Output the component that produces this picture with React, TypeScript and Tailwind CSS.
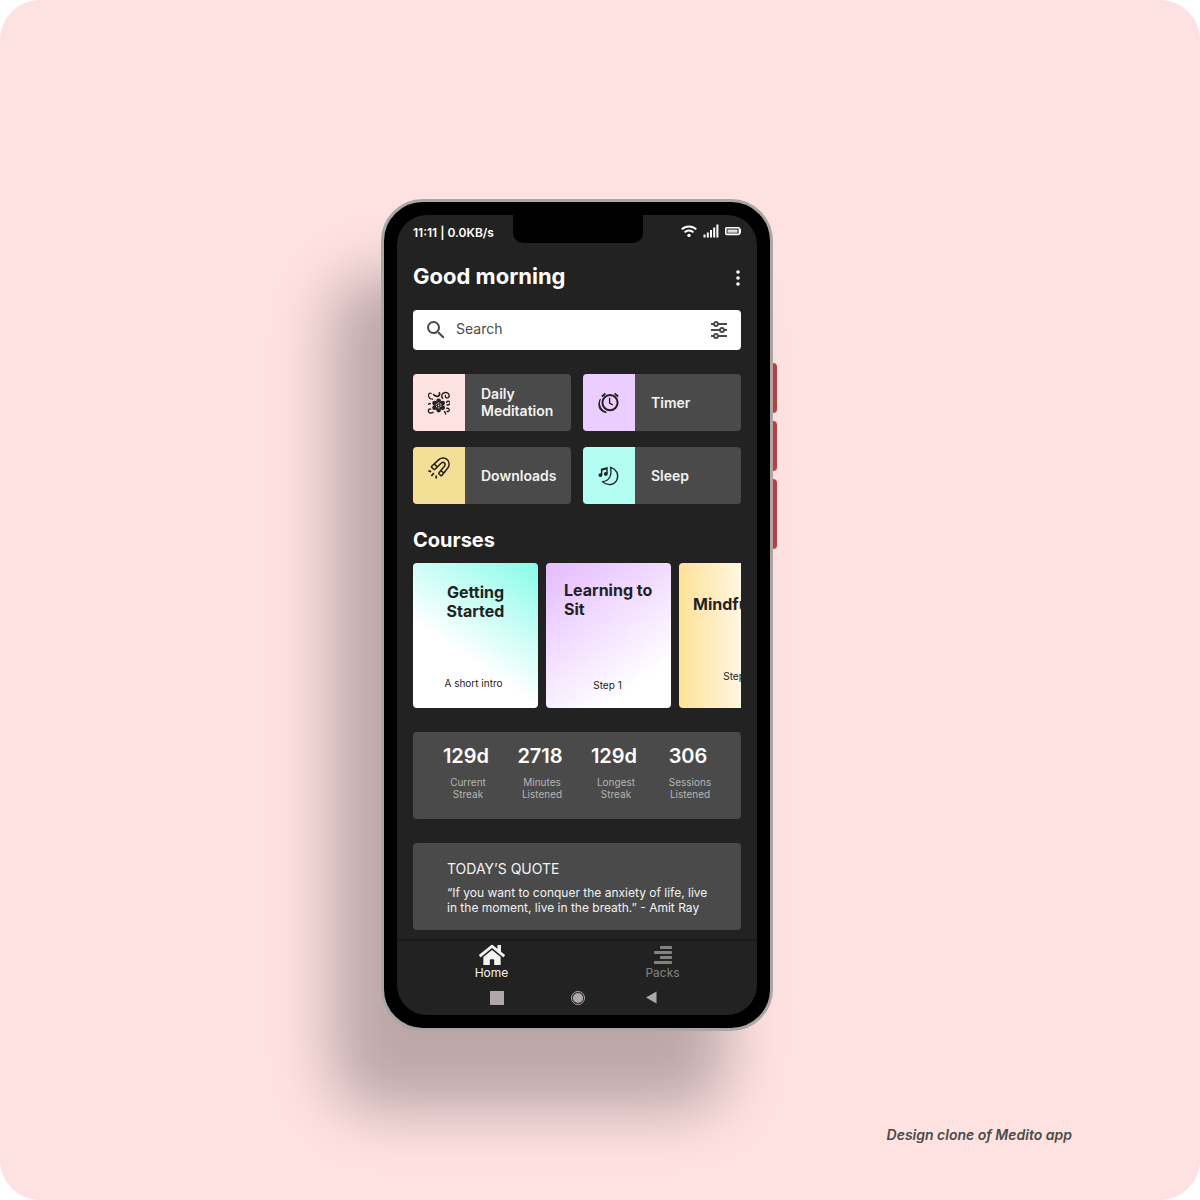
import React from "react";
import { FaHome } from "react-icons/fa";
import { MdSearch } from "react-icons/md";

function WifiIcon() {
  return (
    <svg width="16" height="14" viewBox="0 0 16 14" fill="none" stroke="#fff" strokeWidth="2" aria-hidden="true">
      <path d="M0.8 5.4C4.8 1.5 11.2 1.5 15.2 5.4" />
      <path d="M3.6 8.4C6 6 10 6 12.4 8.4" />
      <circle cx="8" cy="11.4" r="1.7" fill="#fff" stroke="none" />
    </svg>
  );
}

function SignalIcon() {
  return (
    <svg width="16" height="14" viewBox="0 0 16 14" fill="#fff" aria-hidden="true">
      <rect x="0.5" y="10.5" width="2" height="3" />
      <rect x="3.8" y="8.5" width="2" height="5" />
      <rect x="7" y="6" width="2" height="7.5" />
      <rect x="10.2" y="3.5" width="2" height="10" />
      <rect x="13.4" y="0.5" width="2" height="13" />
    </svg>
  );
}

function BatteryIcon() {
  return (
    <svg width="16" height="14" viewBox="0 0 16 14" aria-hidden="true">
      <rect x="0.8" y="3.8" width="13.6" height="6.6" rx="1" fill="none" stroke="#fff" strokeWidth="1.6" />
      <rect x="2.5" y="5.5" width="10" height="3.2" fill="#ddd" />
      <rect x="14.6" y="4.8" width="1.4" height="4.6" rx="0.5" fill="#fff" />
    </svg>
  );
}

function FilterIcon() {
  return (
    <svg width="18" height="18" viewBox="0 0 18 18" fill="none" stroke="#4a4a4a" strokeWidth="1.9" aria-hidden="true">
      <path d="M1 3h3M8 3h9M1 9h9M14 9h3M1 15h3M8 15h9" />
      <circle cx="6" cy="3" r="2" />
      <circle cx="12" cy="9" r="2" />
      <circle cx="6" cy="15" r="2" />
    </svg>
  );
}

function FlowerIcon() {
  return (
    <svg width="24" height="24" viewBox="0 0 24 24" fill="none" stroke="#222" strokeLinecap="round" aria-hidden="true">
      <g fill="#222" stroke="none">
        <circle cx="11.6" cy="9.8" r="2.4" />
        <circle cx="15.6" cy="12.1" r="2.4" />
        <circle cx="15.6" cy="16.7" r="2.4" />
        <circle cx="11.6" cy="19" r="2.4" />
        <circle cx="7.6" cy="16.7" r="2.4" />
        <circle cx="7.6" cy="12.1" r="2.4" />
        <circle cx="11.6" cy="14.4" r="4.4" />
      </g>
      <circle cx="11.6" cy="14.4" r="2.5" stroke="#fee1e1" strokeWidth="1" strokeLinecap="butt" strokeDasharray="1.7 0.9" />
      <circle cx="11.6" cy="14.4" r="0.8" fill="#fee1e1" stroke="none" />
      <path strokeWidth="1.2" d="M5.8 8.2C3.6 8.2 1.8 6.8 1.5 4.6 1.3 2.8 2.8 1.7 4.2 2.5" />
      <path strokeWidth="1.7" d="M6.6 3.6C7.6 5 9 5 10.2 5.4M12.4 1.8C12.8 3.2 12.4 4.6 11.2 5.2" />
      <path strokeWidth="1.4" d="M15.6 7.4C13.8 5 15 1.7 18.2 1.5 21.6 1.3 23.2 4.4 21.6 6.2 20 7.6 17.6 6.6 18.4 4.6" />
      <path strokeWidth="1.4" d="M19.6 11.4C20 10.2 21.6 9.8 22.4 10.8M20 14C21 14.2 22.2 13.8 22.4 12.8" />
      <path strokeWidth="1.4" d="M19.8 17.2C21.6 17 22.8 18.4 22 20 21.4 21 20.4 20.8 20 20.2M17.4 20.6C18.2 21 18.6 21.8 18.6 23" />
      <path strokeWidth="1.4" d="M3.6 18.2C1.8 17.6 .9 19.2 1.6 20.8 2.6 22.4 4.8 22.4 6 21.2M1.6 13.4C1.8 12.6 2.6 12.2 3.4 12.6" />
    </svg>
  );
}

function ClockIcon() {
  return (
    <svg width="24" height="24" viewBox="0 0 24 24" fill="none" stroke="#222" aria-hidden="true">
      <circle cx="13" cy="11.6" r="7.6" strokeWidth="2" />
      <path strokeWidth="1.4" d="M12.6 6.8V12L16 14" />
      <path strokeWidth="1.9" d="M4.8 5.4 8.4 2.6M17.6 2.6 21.2 5.4" />
      <path fill="#222" stroke="none" d="M3.6 7.4C-1 13.4 1.6 21.6 10 21.8L8.6 20.4C3.8 18.6 1.8 13 3.6 7.4Z" />
      <path strokeWidth="1.1" d="M3.4 8C.6 14 3.6 20.4 9.4 21.2" />
    </svg>
  );
}

function MagnetIcon() {
  return (
    <svg width="24" height="24" viewBox="0 0 24 24" fill="none" stroke="#222" strokeWidth="1.5" strokeLinejoin="round" aria-hidden="true">
      <path d="M4.7 10.3 11.8 3.6C14.2 1.4 18.2 1.4 20.4 3.8 22.8 6.2 22.6 10.2 20.4 12.6L14.8 19.4C14.4 19.8 14 19.8 13.6 19.4L12 18C11.6 17.6 11.6 17.2 12 16.8L17.4 10.2C18.4 8.8 18.2 7.6 17.4 6.9 16.6 6.1 15.4 6.1 14.4 7L8 13.2C7.6 13.6 7.2 13.6 6.8 13.2L4.7 11.4C4.3 11 4.3 10.7 4.7 10.3Z" />
      <path d="M7.2 8 10.4 10.9M13.8 14.6 16.8 17" />
      <path strokeWidth="1.8" d="M1.4 14.8 4.2 15.6M6.8 17.2 4.4 20M9.2 19.4V22.6" />
    </svg>
  );
}

function MoonMusicIcon() {
  return (
    <svg width="24" height="24" viewBox="0 0 24 24" fill="none" stroke="#222" aria-hidden="true">
      <path strokeWidth="1.3" strokeLinejoin="round" d="M13.4 3.4C19 4.8 22 10 20.2 15 18 21.2 10.4 22.6 5.4 17.6 12 17.2 15.4 11 13.4 3.4Z" />
      <path strokeWidth="1.4" d="M4.6 11.2V5.2L10 3.8V10" />
      <path strokeWidth="1.6" d="M4.6 6 10 4.6" />
      <circle cx="3.4" cy="11.1" r="1.9" fill="#222" stroke="none" />
      <circle cx="8.8" cy="9.9" r="1.9" fill="#222" stroke="none" />
    </svg>
  );
}

function PacksIcon() {
  return (
    <svg width="18" height="18" viewBox="0 0 18 18" fill="#828282" aria-hidden="true">
      <rect x="6" y="0" width="12" height="3" rx="0.8" />
      <rect x="0" y="5" width="18" height="3" rx="0.8" />
      <rect x="6" y="10" width="12" height="3" rx="0.8" />
      <rect x="0" y="15" width="18" height="3" rx="0.8" />
    </svg>
  );
}

const shortcuts = [
  { label: "Daily Meditation", tint: "bg-[#fee1e1]", icon: <FlowerIcon />, place: "items-center" },
  { label: "Timer", tint: "bg-[#ebceff]", icon: <ClockIcon />, place: "items-center" },
  { label: "Downloads", tint: "bg-[#f4df96]", icon: <MagnetIcon />, place: "items-start pt-[9px]" },
  { label: "Sleep", tint: "bg-[#b3fdf3]", icon: <MoonMusicIcon />, place: "items-center" },
];

const courses = [
  {
    title: "Getting Started",
    step: "A short intro",
    card: "bg-[linear-gradient(215deg,#87fbea_0%,#ffffff_62%)] px-6 pt-5 pb-[19px]",
    heading: "text-center",
    caption: "pr-1",
  },
  {
    title: "Learning to Sit",
    step: "Step 1",
    card: "bg-[linear-gradient(145deg,#e6bfff_5%,#ffffff_80%)] pl-[18px] pr-3 pt-[18px] pb-[17px]",
    heading: "text-left",
    caption: "pr-2",
  },
  {
    title: "Mindfulness",
    step: "Step 1",
    card: "bg-[linear-gradient(90deg,#ffe299_0%,#ffffff_70%)] px-[14px] pt-8 pb-[26px]",
    heading: "text-left",
    caption: "pr-2",
  },
];

const stats = [
  { value: "129d", label: "Current Streak" },
  { value: "2718", label: "Minutes Listened" },
  { value: "129d", label: "Longest Streak" },
  { value: "306", label: "Sessions Listened" },
];

function StatusBar() {
  return (
    <div className="flex items-start px-4">
      <div className="flex-1 pt-[10px] pr-[2px] text-xs leading-4 font-semibold whitespace-nowrap text-white">11:11 | 0.0KB/s</div>
      <div className="h-7 w-[130px] rounded-b-[10px] bg-black" />
      <div className="flex flex-1 justify-end gap-[6px] pt-[9px]">
        <WifiIcon />
        <SignalIcon />
        <BatteryIcon />
      </div>
    </div>
  );
}

function Screen() {
  return (
    <div className="overflow-hidden rounded-[30px] bg-[#222222]">
      <StatusBar />
      <main className="px-4">
        <header className="mt-5 flex items-center justify-between">
          <h1 className="text-[22px] leading-[26px] font-bold text-white">Good morning</h1>
          <button type="button" aria-label="More options" className="flex w-[7px] justify-center pt-[3px]">
            <svg width="4" height="16" viewBox="0 0 4 16" fill="#fff" aria-hidden="true">
              <circle cx="2" cy="2" r="1.8" />
              <circle cx="2" cy="8" r="1.8" />
              <circle cx="2" cy="14" r="1.8" />
            </svg>
          </button>
        </header>

        <form role="search" className="mt-[21px] flex h-10 items-center rounded bg-white pr-[13px] pl-[11px]">
          <label htmlFor="search" aria-label="Search">
            <MdSearch size={24} color="#4a4a4a" aria-hidden="true" />
          </label>
          <input
            id="search"
            type="search"
            placeholder="Search"
            className="ml-2 min-w-0 flex-1 pb-[2px] text-sm leading-5 text-[#4a4a4a] outline-none placeholder:text-[#4a4a4a]"
          />
          <button type="button" aria-label="Filters">
            <FilterIcon />
          </button>
        </form>

        <div className="mt-6 grid grid-cols-2 gap-x-3 gap-y-4">
          {shortcuts.map((s) => (
            <button key={s.label} type="button" className="flex h-[57px] overflow-hidden rounded bg-[#4a4a4a] text-left">
              <span className={`flex w-[52px] shrink-0 justify-center self-stretch ${s.tint} ${s.place}`}>{s.icon}</span>
              <span className="flex-1 self-center pb-px pl-4 text-sm leading-[17px] font-semibold text-[#f2f2f2]">{s.label}</span>
            </button>
          ))}
        </div>

        <h2 className="mt-6 text-xl leading-6 font-bold text-white">Courses</h2>
        <div className="mt-[11px] flex gap-2 overflow-hidden">
          {courses.map((c) => (
            <a
              key={c.title}
              href="#courses"
              className={`flex h-[145px] w-[125px] shrink-0 flex-col justify-between rounded text-[#222222] ${c.card}`}
            >
              <h3 className={`text-base leading-[19px] font-bold ${c.heading}`}>{c.title}</h3>
              <p className={`text-center text-[10px] leading-3 ${c.caption}`}>{c.step}</p>
            </a>
          ))}
        </div>

        <dl className="mt-6 grid grid-cols-4 rounded bg-[#4a4a4a] pt-3 pr-4 pb-[19px] pl-4">
          {stats.map((s) => (
            <div key={s.label} className="flex flex-col-reverse items-center gap-2 text-center">
              <dt className="pr-3 pl-4 text-[10px] leading-3 text-[#b5b5b5]">{s.label}</dt>
              <dd className="text-xl leading-6 font-semibold text-white">{s.value}</dd>
            </div>
          ))}
        </dl>

        <section className="mt-6 rounded bg-[#4a4a4a] pt-[17px] pr-6 pb-[15px] pl-[34px] text-[#f2f2f2]">
          <h2 className="text-sm leading-[18px]">TODAY’S QUOTE</h2>
          <p className="mt-[7px] text-xs leading-[15px]">
            “If you want to conquer the anxiety of life, live in the moment, live in the breath.” - Amit Ray
          </p>
        </section>
      </main>

      <nav className="mt-[9px] grid grid-cols-2 border-t-2 border-[#1b1b1b] px-[9px] pt-1 text-xs leading-[14px]">
        <a href="#home" aria-current="page" className="flex flex-col items-center gap-px text-[#f2f2f2]">
          <span className="flex h-5 items-center">
            <FaHome size={26} aria-hidden="true" />
          </span>
          Home
        </a>
        <a href="#packs" className="flex flex-col items-center gap-px text-[#828282]">
          <span className="flex h-5 items-center">
            <PacksIcon />
          </span>
          Packs
        </a>
      </nav>

      <div className="mt-[11px] flex items-center justify-center pr-[7px] pb-[10px]">
        <button type="button" aria-label="Recent apps" className="size-[14px] bg-[#aea8a8]" />
        <button type="button" aria-label="Home screen" className="ml-[67px]">
          <svg width="14" height="14" viewBox="0 0 14 14" className="block" aria-hidden="true">
            <circle cx="7" cy="7" r="6.5" fill="none" stroke="#aea8a8" />
            <circle cx="7" cy="7" r="5.1" fill="#aea8a8" />
          </svg>
        </button>
        <button type="button" aria-label="Back" className="ml-[61px]">
          <svg width="11" height="14" viewBox="0 0 11 14" className="block" aria-hidden="true">
            <path d="M0 6.5 10.5 0.5V12.5Z" fill="#aea8a8" />
          </svg>
        </button>
      </div>
    </div>
  );
}

export default function App() {
  return (
    <div className="bg-white font-['Inter',sans-serif]">
      <div className="flex min-h-screen flex-col rounded-[40px] bg-[#fee1e1] pt-[199px]">
        <div className="flex justify-center pr-[42px]">
          <div className="w-full max-w-[392px] rounded-[42px] border-[3px] border-[#aba6a6] bg-black p-[13px] shadow-[-48px_78px_60px_rgba(0,0,0,0.26)]">
            <Screen />
          </div>
          <div className="flex w-1 shrink-0 flex-col gap-2 pt-[164px]" aria-hidden="true">
            <div className="h-[50px] rounded-r bg-[#b93f43]" />
            <div className="h-[50px] rounded-r bg-[#b93f43]" />
            <div className="h-[70px] rounded-r bg-[#b93f43]" />
          </div>
        </div>
        <p className="mt-[94px] pr-32 text-right text-sm leading-5 font-semibold text-[#4a4a4a] italic">
          Design clone of Medito app
        </p>
      </div>
    </div>
  );
}
